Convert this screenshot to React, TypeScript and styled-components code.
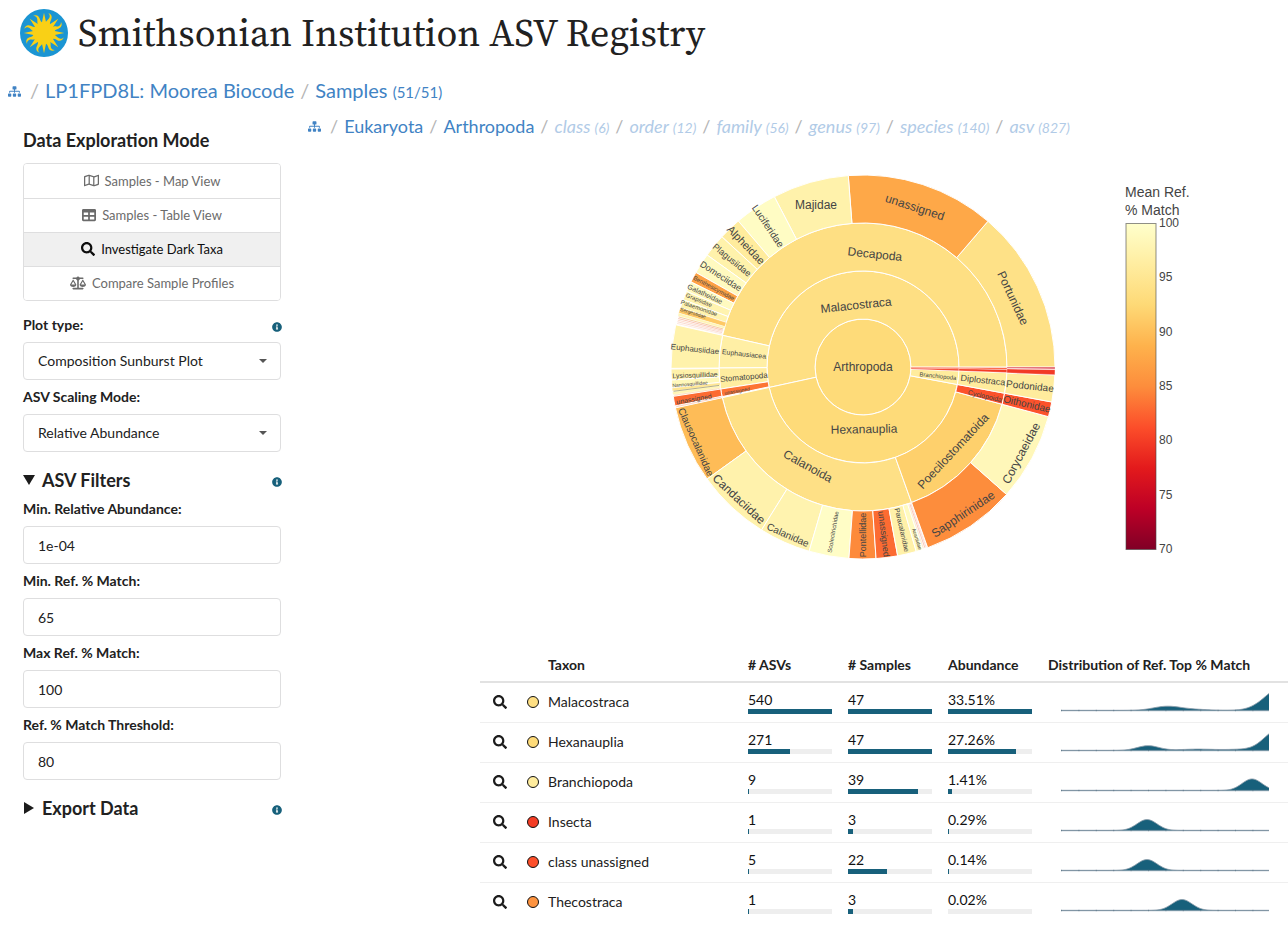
import React from "react";
import styled, { createGlobalStyle } from "styled-components";
import { FaSitemap, FaRegMap, FaTable, FaSearch, FaInfoCircle } from "react-icons/fa";
import { FaScaleBalanced } from "react-icons/fa6";

const TEAL = "#17607b";
const LINK = "#4183c4";
const BORDER = "#dededf";

const GlobalStyle = createGlobalStyle`
  *, *::before, *::after { box-sizing: border-box; }
  body {
    margin: 0;
    background: #fff;
    color: #212121;
    font-family: Lato, "Liberation Sans", sans-serif;
    font-size: 14px;
    line-height: 20px;
  }
`;

const Header = styled.header`
  display: flex;
  align-items: center;
  gap: 10px;
  height: 66px;
  padding: 0 20px;
`;

const Title = styled.h1`
  margin: 0;
  font-family: "Source Serif 4", "Source Serif Pro", "Liberation Serif", serif;
  font-size: 38px;
  line-height: 48px;
  font-weight: 400;
  white-space: nowrap;
`;

const Crumbs = styled.nav<{ $size: number }>`
  display: flex;
  align-items: baseline;
  gap: 6px;
  font-size: ${(p) => p.$size}px;
  line-height: 28px;
  white-space: nowrap;
`;

const ProjectCrumbs = styled(Crumbs)`
  padding: 10px 8px 0;
`;

const TaxonCrumbs = styled(Crumbs)`
  padding: 6px 8px 0;
`;

const CrumbLink = styled.a`
  color: ${LINK};
  text-decoration: none;
`;

const CrumbIcon = styled(CrumbLink)`
  display: flex;
  margin-right: 3px;
  font-size: 13px;
`;

const CrumbCount = styled.span<{ $size: number }>`
  font-size: ${(p) => p.$size}px;
`;

const CrumbRank = styled.a`
  color: #b1cbe7;
  font-style: italic;
  text-decoration: none;
`;

const Slash = styled.span`
  color: #b5b5b5;
`;

const Layout = styled.div`
  display: grid;
  grid-template-columns: 300px minmax(0, 1fr);
`;

const Sidebar = styled.aside`
  padding: 24px 19px 0 23px;
`;

const SideTitle = styled.h2`
  margin: 0 0 13px;
  font-size: 18px;
  line-height: 20px;
  font-weight: 700;
`;

const ModeGroup = styled.div`
  display: flex;
  flex-direction: column;
  margin-bottom: 14px;
  border: 1px solid ${BORDER};
  border-radius: 4px;
  overflow: hidden;
`;

const ModeButton = styled.button<{ $active?: boolean; $icon?: number }>`
  display: flex;
  align-items: center;
  justify-content: center;
  gap: 6px;
  height: 34px;
  padding: 0 0 1px;
  border: 0;
  background: ${(p) => (p.$active ? "#f0f0f0" : "#fff")};
  color: ${(p) => (p.$active ? "#0d0d0d" : "#6b6b6b")};
  font: inherit;
  font-size: 13px;
  & + & { border-top: 1px solid ${BORDER}; }
  svg { font-size: ${(p) => p.$icon ?? 14}px; }
`;

const Field = styled.div`
  margin-bottom: 7px;
`;

const LabelRow = styled.div`
  display: flex;
  align-items: center;
  justify-content: space-between;
  margin-bottom: 7px;
`;

const Label = styled.label`
  font-weight: 700;
`;

const InfoButton = styled.button`
  display: flex;
  padding: 4px 0 0;
  margin-right: -1px;
  border: 0;
  background: none;
  color: ${TEAL};
  font-size: 10px;
`;

const Control = styled.div`
  position: relative;
  display: flex;
  align-items: center;
`;

const Caret = styled.svg`
  position: absolute;
  right: 14px;
  pointer-events: none;
`;

const controlLook = `
  width: 100%;
  height: 38px;
  padding: 0 14px;
  border: 1px solid ${BORDER};
  border-radius: 4px;
  background: #fff;
  color: #212121;
  font: inherit;
`;

const Select = styled.select`
  ${controlLook}
  appearance: none;
`;

const Input = styled.input`
  ${controlLook}
`;

const Section = styled.details`
  margin-top: 18px;
`;

const Summary = styled.summary`
  display: flex;
  align-items: center;
  gap: 7px;
  margin-bottom: 9px;
  font-size: 18px;
  line-height: 20px;
  font-weight: 700;
  list-style: none;
  &::-webkit-details-marker { display: none; }
  ${InfoButton} { margin-left: auto; }
`;

const Marker = styled.svg`
  width: 12px;
  height: 12px;
  fill: #1c1c1c;
  details:not([open]) & { transform: rotate(-90deg); }
`;

const Main = styled.main`
  min-width: 0;
`;

const Results = styled.div`
  margin-left: 180px;
`;

const Plot = styled.svg`
  display: block;
  margin: 23px 0 74px 180px;
`;

const Table = styled.table`
  width: 100%;
  table-layout: fixed;
  border-collapse: collapse;
`;

const HeadCell = styled.th<{ $w?: number }>`
  width: ${(p) => (p.$w ? `${p.$w}px` : "auto")};
  height: 33px;
  padding: 0;
  border-bottom: 2px solid #e2e2e2;
  text-align: left;
  font-weight: 700;
  white-space: nowrap;
`;

const Row = styled.tr`
  & + & td { border-top: 1px solid #efefef; }
`;

const Cell = styled.td`
  height: 40px;
  padding: 0;
`;

const ZoomButton = styled.button`
  display: flex;
  padding: 0 0 0 13px;
  border: 0;
  background: none;
  color: #1c1c1c;
  font-size: 14px;
`;

const Dot = styled.span<{ $color: string }>`
  display: block;
  width: 12px;
  height: 12px;
  margin-left: 5px;
  border: 1px solid #111;
  border-radius: 50%;
  background: ${(p) => p.$color};
`;

const Figure = styled.div`
  line-height: 18px;
  color: #111;
`;

const Track = styled.div`
  width: 84px;
  height: 5px;
  background: #eee;
`;

const Fill = styled.div`
  height: 5px;
  background: ${TEAL};
`;

const Spark = styled.svg`
  display: block;
  margin-left: 13px;
`;

/* colour scale: % match to colour */
const STOPS: [number, number[]][] = [
  [70, [128, 0, 38]],
  [73.75, [189, 0, 38]],
  [77.5, [227, 26, 28]],
  [81.25, [252, 78, 42]],
  [85, [253, 141, 60]],
  [88.75, [254, 178, 76]],
  [92.5, [254, 217, 118]],
  [96.25, [255, 237, 160]],
  [100, [255, 255, 204]],
];

function matchColor(v: number) {
  const i = Math.min(STOPS.length - 2, Math.max(0, Math.floor((v - 70) / 3.75)));
  const [a, ca] = STOPS[i];
  const cb = STOPS[i + 1][1];
  const t = (v - a) / 3.75;
  return `rgb(${ca.map((c, k) => Math.round(c + (cb[k] - c) * t)).join(",")})`;
}

/* [ring, start angle, end angle, mean % match], counterclockwise from the right */
const SECTORS: [number, number, number, number][] = [
  [1, 0, 192.3, 93.7],
  [1, 192.3, 349.5, 92.8],
  [1, 349.5, 357.6, 96],
  [1, 357.7, 358.9, 80],
  [1, 358.9, 359.7, 81.3],
  [2, 0, 167.3, 93.7],
  [2, 167.3, 180.4, 96.7],
  [2, 180.4, 188.8, 96.2],
  [2, 188.8, 191.9, 83.5],
  [2, 192.3, 289.7, 93.9],
  [2, 289.7, 345, 91.6],
  [2, 345, 349.5, 81.5],
  [2, 349.5, 357.7, 96],
  [2, 357.8, 359, 80],
  [2, 359.1, 359.7, 81.3],
  [3, 0, 49.4, 94],
  [3, 49.4, 94.4, 87.7],
  [3, 94.4, 117.5, 97.2],
  [3, 117.5, 130.5, 99.3],
  [3, 130.5, 137.3, 96],
  [3, 137.3, 144.3, 97.2],
  [3, 144.3, 150.5, 99],
  [3, 150.5, 153.7, 87],
  [3, 153.7, 156.8, 99],
  [3, 156.8, 159.5, 97.5],
  [3, 159.5, 162, 97.5],
  [3, 162, 163.7, 91],
  [3, 163.7, 164.5, 98],
  [3, 167.3, 180.4, 97.2],
  [3, 180.6, 183.9, 97],
  [3, 183.9, 186.1, 98.5],
  [3, 186.3, 187.2, 95],
  [3, 187.4, 188.3, 98],
  [3, 188.8, 191.7, 83],
  [3, 192.3, 215.7, 89.7],
  [3, 215.7, 238.1, 97.3],
  [3, 238.1, 253.7, 97.5],
  [3, 253.7, 265.8, 99.5],
  [3, 265.8, 273.9, 84.8],
  [3, 273.9, 280.4, 83],
  [3, 280.4, 286.1, 97],
  [3, 286.1, 288, 99],
  [3, 289.7, 318.4, 85],
  [3, 318.4, 345, 98.4],
  [3, 345, 349.5, 81.5],
  [3, 349.5, 357.6, 96],
  [3, 357.7, 359.2, 79.8],
  [3, 359.5, 359.9, 76],
];

/* hairline families too thin for a full wedge: [angle, colour] */
const HAIRLINES: [number, string][] = [
  [164.8, "#f3c08a"], [165.3, "#f7b8a5"], [165.8, "#fbd3c0"], [166.3, "#f9d2c5"], [166.8, "#fde4da"],
  [187.3, "#a09a72"], [188.5, "#fbd9b0"], [192, "#fbc9b5"], [288.4, "#fde9c0"], [288.9, "#f9b9ac"], [289.3, "#fbd8cf"],
];

/* [text, x, y, rotation, size], relative to the centre of the sunburst */
const NAMES: [string, number, number, number, number][] = [
  ["Arthropoda", 0, 0, 0, 12],
  ["Malacostraca", -7, -62, -6, 12],
  ["Hexanauplia", 1, 62, -1, 12],
  ["Branchiopoda", 75, 9, 6, 6],
  ["Decapoda", 12, -113, 6, 12],
  ["Euphausiacea", -119, -13, 6, 7],
  ["Stomatopoda", -119, 10, -5, 8],
  ["unassigned", -126, 24, -10, 5],
  ["Calanoida", -55, 99, 29, 12],
  ["Poecilostomatoida", 90, 84, -47, 12],
  ["Cyclopoida", 122, 29, 13, 7],
  ["Diplostraca", 120, 13, 6, 9],
  ["Portunidae", 150, -69, 65, 12],
  ["unassigned", 52, -160, 18, 12],
  ["Majidae", -47, -162, 0, 12],
  ["Luciferidae", -95, -141, 56, 10],
  ["Alpheidae", -117, -122, 46, 11],
  ["Plagusiidae", -131, -107, 39, 9],
  ["Domeciidae", -142, -91, 33, 9],
  ["Benthesicymidae", -149, -79, 28, 6],
  ["Galatheidae", -158, -73, 25, 7],
  ["Grapsidae", -164, -67, 22, 6],
  ["Palaemonidae", -164, -59, 19, 6],
  ["Sergestidae", -170, -54, 17, 5],
  ["Euphausiidae", -168, -18, 6, 8],
  ["Lysiosquillidae", -168, 8, -2, 7],
  ["Nannosquillidae", -173, 17, -5, 5],
  ["unassigned", -169, 32, -10, 7],
  ["Clausocalanidae", -167, 75, 66, 10],
  ["Candaciidae", -124, 132, 43, 12],
  ["Calanidae", -75, 168, 24, 10],
  ["Scolecitrichidae", -30, 165, -80, 6],
  ["Pontellidae", 0, 168, -90, 9],
  ["unassigned", 21, 167, 83, 9],
  ["Paracalanidae", 39, 163, 77, 7],
  ["Acartiidae", 54, 172, 73, 5],
  ["Sapphirinidae", 100, 147, -34, 12],
  ["Corycaeidae", 158, 86, -62, 12],
  ["Oithonidae", 164, 37, 13, 10],
  ["Podonidae", 167, 19, 6, 10],
];

const rad = (d: number) => (d * Math.PI) / 180;
const pt = (r: number, d: number) => `${(r * Math.cos(rad(d))).toFixed(2)} ${(-r * Math.sin(rad(d))).toFixed(2)}`;

function wedge(ring: number, a: number, b: number) {
  const r0 = ring * 48;
  const r1 = r0 + 48;
  const big = b - a > 180 ? 1 : 0;
  return `M${pt(r1, a)}A${r1} ${r1} 0 ${big} 0 ${pt(r1, b)}L${pt(r0, b)}A${r0} ${r0} 0 ${big} 1 ${pt(r0, a)}Z`;
}

function Sunburst() {
  return (
    <Plot width="560" height="410" viewBox="0 0 560 410" role="img" aria-label="Composition sunburst plot">
      <defs>
        <linearGradient id="scale" x1="0" y1="1" x2="0" y2="0">
          {STOPS.map(([v]) => (
            <stop key={v} offset={(v - 70) / 30} stopColor={matchColor(v)} />
          ))}
        </linearGradient>
      </defs>
      <g transform="translate(203 202)" stroke="#fff">
        <circle r="48" fill={matchColor(92.8)} />
        {SECTORS.map(([ring, a, b, v], i) => (
          <path key={i} d={wedge(ring, a, b)} fill={matchColor(v)} strokeWidth={b - a < 1.7 ? 0.3 : 1} />
        ))}
        {HAIRLINES.map(([a, c]) => (
          <path key={a} d={`M${pt(145, a)}L${pt(191, a)}`} stroke={c} strokeWidth="0.8" />
        ))}
      </g>
      <g transform="translate(203 202)" fill="#444" fontFamily="'Liberation Sans', Arial, sans-serif" textAnchor="middle">
        {NAMES.map(([t, x, y, rot, size], i) => (
          <text key={i} transform={`translate(${x} ${y}) rotate(${rot})`} dy="0.35em" fontSize={size}>
            {t}
          </text>
        ))}
      </g>
      <g fill="#444" fontFamily="'Liberation Sans', Arial, sans-serif">
        <text x="465" y="32" fontSize="14">Mean Ref.</text>
        <text x="465" y="50" fontSize="14">% Match</text>
        <rect x="466" y="58.5" width="30" height="326" fill="url(#scale)" stroke="#444" strokeOpacity="0.6" />
        {[100, 95, 90, 85, 80, 75, 70].map((v, i) => (
          <text key={v} x="499" y={62 + Math.round(i * 54.33)} fontSize="12">{v}</text>
        ))}
      </g>
    </Plot>
  );
}

/* bumps: [centre, height, spread] on a 208px wide axis */
type Bump = [number, number, number];

function Distribution({ bumps }: { bumps: Bump[] }) {
  const pts: string[] = [];
  for (let x = 0; x <= 208; x += 2) {
    const h = bumps.reduce((s, [c, a, w]) => s + a * Math.exp(-((x - c) ** 2) / (2 * w * w)), 0);
    pts.push(`${x} ${(18.5 - h).toFixed(2)}`);
  }
  return (
    <Spark width="208" height="20" viewBox="0 0 208 20" aria-hidden="true">
      <path d={`M0 18.5L${pts.join("L")}L208 18.5Z`} fill={TEAL} />
      <path d={`M${pts.join("L")}`} fill="none" stroke="#8d9dab" strokeWidth="0.8" />
      <path d="M0 18.5H208" stroke="#5f7b8d" strokeOpacity="0.5" strokeWidth="1.4" />
      <path d="M0 18.5H208" stroke="#4d6b7d" strokeOpacity="0.5" strokeWidth="1.4" strokeDasharray="1 16.4" />
    </Spark>
  );
}

const TAXA: { name: string; match: number; asvs: number; samples: number; abundance: string; fills: number[]; bumps: Bump[] }[] = [
  { name: "Malacostraca", match: 93.7, asvs: 540, samples: 47, abundance: "33.51%", fills: [84, 84, 84], bumps: [[106, 4.2, 14], [135, 1, 14], [222, 24, 17]] },
  { name: "Hexanauplia", match: 92.8, asvs: 271, samples: 47, abundance: "27.26%", fills: [42, 84, 68], bumps: [[87, 4.8, 11], [137, 1.4, 18], [180, 1.1, 14], [216, 20, 13]] },
  { name: "Branchiopoda", match: 96, asvs: 9, samples: 39, abundance: "1.41%", fills: [1, 70, 4], bumps: [[191, 11.6, 10]] },
  { name: "Insecta", match: 80, asvs: 1, samples: 3, abundance: "0.29%", fills: [1, 5, 1], bumps: [[86, 11, 10]] },
  { name: "class unassigned", match: 81.3, asvs: 5, samples: 22, abundance: "0.14%", fills: [1, 39, 1], bumps: [[86, 11, 10]] },
  { name: "Thecostraca", match: 85.6, asvs: 1, samples: 3, abundance: "0.02%", fills: [1, 5, 0], bumps: [[121, 11, 10]] },
];

function Meter({ value, fill }: { value: React.ReactNode; fill: number }) {
  return (
    <>
      <Figure>{value}</Figure>
      <Track>
        <Fill style={{ width: fill }} />
      </Track>
    </>
  );
}

function Logo() {
  const turns = [0, 45, 90, 135, 180, 225, 270, 315];
  return (
    <svg width="48" height="48" viewBox="-24 -24 48 48" role="img" aria-label="Smithsonian sunburst">
      <circle r="24" fill="#1b95d3" />
      <g fill="#f9d016">
        <circle r="11" />
        {turns.map((t) => (
          <g key={t} transform={`rotate(${t})`}>
            <path d="M-2.3 -9.5L0 -20.2L2.3 -9.5Z" />
            <path transform="rotate(22.5)" d="M-2.4 -9.5C-2.8 -12.6 -0.6 -14.2 -0.8 -16.6C-0.9 -18.2 -2 -19.3 -3.6 -19.8C-0.6 -20.4 1.8 -18.2 1.5 -15C1.3 -13.2 1.5 -11.6 2.4 -9.5Z" />
          </g>
        ))}
      </g>
    </svg>
  );
}

function Info({ about }: { about: string }) {
  return (
    <InfoButton type="button" aria-label={`About ${about}`}>
      <FaInfoCircle />
    </InfoButton>
  );
}

function SelectField({ id, label, value, info }: { id: string; label: string; value: string; info?: boolean }) {
  return (
    <Field>
      <LabelRow>
        <Label htmlFor={id}>{label}</Label>
        {info && <Info about={label} />}
      </LabelRow>
      <Control>
        <Select id={id} defaultValue={value}>
          <option>{value}</option>
        </Select>
        <Caret width="8" height="4" viewBox="0 0 8 4">
          <path d="M0 0H8L4 4Z" fill="#555" />
        </Caret>
      </Control>
    </Field>
  );
}

function TextField({ id, label, value }: { id: string; label: string; value: string }) {
  return (
    <Field>
      <LabelRow>
        <Label htmlFor={id}>{label}</Label>
      </LabelRow>
      <Input id={id} type="text" defaultValue={value} />
    </Field>
  );
}

function SectionHead({ title }: { title: string }) {
  return (
    <Summary>
      <Marker viewBox="0 0 12 12">
        <path d="M0 1H12L6 11Z" />
      </Marker>
      {title}
      <Info about={title} />
    </Summary>
  );
}

const RANKS: [string, number][] = [["class", 6], ["order", 12], ["family", 56], ["genus", 97], ["species", 140], ["asv", 827]];

export default function App() {
  return (
    <>
      <GlobalStyle />
      <Header>
        <Logo />
        <Title>Smithsonian Institution ASV Registry</Title>
      </Header>
      <ProjectCrumbs $size={20} aria-label="Project">
        <CrumbIcon href="#" aria-label="Home"><FaSitemap /></CrumbIcon>
        <Slash>/</Slash>
        <CrumbLink href="#">LP1FPD8L: Moorea Biocode</CrumbLink>
        <Slash>/</Slash>
        <CrumbLink href="#">Samples <CrumbCount $size={15}>(51/51)</CrumbCount></CrumbLink>
      </ProjectCrumbs>
      <Layout>
        <Sidebar>
          <SideTitle>Data Exploration Mode</SideTitle>
          <ModeGroup>
            <ModeButton type="button" $icon={15}><FaRegMap />Samples - Map View</ModeButton>
            <ModeButton type="button"><FaTable />Samples - Table View</ModeButton>
            <ModeButton type="button" $active aria-pressed="true"><FaSearch />Investigate Dark Taxa</ModeButton>
            <ModeButton type="button" $icon={16}><FaScaleBalanced />Compare Sample Profiles</ModeButton>
          </ModeGroup>
          <SelectField id="plot" label="Plot type:" value="Composition Sunburst Plot" info />
          <SelectField id="scaling" label="ASV Scaling Mode:" value="Relative Abundance" />
          <Section open>
            <SectionHead title="ASV Filters" />
            <TextField id="min-abundance" label="Min. Relative Abundance:" value="1e-04" />
            <TextField id="min-match" label="Min. Ref. % Match:" value="65" />
            <TextField id="max-match" label="Max Ref. % Match:" value="100" />
            <TextField id="threshold" label="Ref. % Match Threshold:" value="80" />
          </Section>
          <Section>
            <SectionHead title="Export Data" />
          </Section>
        </Sidebar>
        <Main>
          <TaxonCrumbs $size={18} aria-label="Taxonomy">
            <CrumbIcon href="#" aria-label="Root"><FaSitemap /></CrumbIcon>
            <Slash>/</Slash>
            <CrumbLink href="#">Eukaryota</CrumbLink>
            <Slash>/</Slash>
            <CrumbLink href="#">Arthropoda</CrumbLink>
            {RANKS.map(([rank, count]) => (
              <React.Fragment key={rank}>
                <Slash>/</Slash>
                <CrumbRank href="#">{rank} <CrumbCount $size={14}>({count})</CrumbCount></CrumbRank>
              </React.Fragment>
            ))}
          </TaxonCrumbs>
          <Results>
            <Sunburst />
            <Table>
              <thead>
                <tr>
                  <HeadCell $w={42} aria-label="Zoom" />
                  <HeadCell $w={26} aria-label="Colour" />
                  <HeadCell $w={200}>Taxon</HeadCell>
                  <HeadCell $w={100}># ASVs</HeadCell>
                  <HeadCell $w={100}># Samples</HeadCell>
                  <HeadCell $w={100}>Abundance</HeadCell>
                  <HeadCell>Distribution of Ref. Top % Match</HeadCell>
                </tr>
              </thead>
              <tbody>
                {TAXA.map((t) => (
                  <Row key={t.name}>
                    <Cell><ZoomButton type="button" aria-label={`Explore ${t.name}`}><FaSearch /></ZoomButton></Cell>
                    <Cell><Dot $color={matchColor(t.match)} /></Cell>
                    <Cell>{t.name}</Cell>
                    <Cell><Meter value={t.asvs} fill={t.fills[0]} /></Cell>
                    <Cell><Meter value={t.samples} fill={t.fills[1]} /></Cell>
                    <Cell><Meter value={t.abundance} fill={t.fills[2]} /></Cell>
                    <Cell><Distribution bumps={t.bumps} /></Cell>
                  </Row>
                ))}
              </tbody>
            </Table>
          </Results>
        </Main>
      </Layout>
    </>
  );
}
